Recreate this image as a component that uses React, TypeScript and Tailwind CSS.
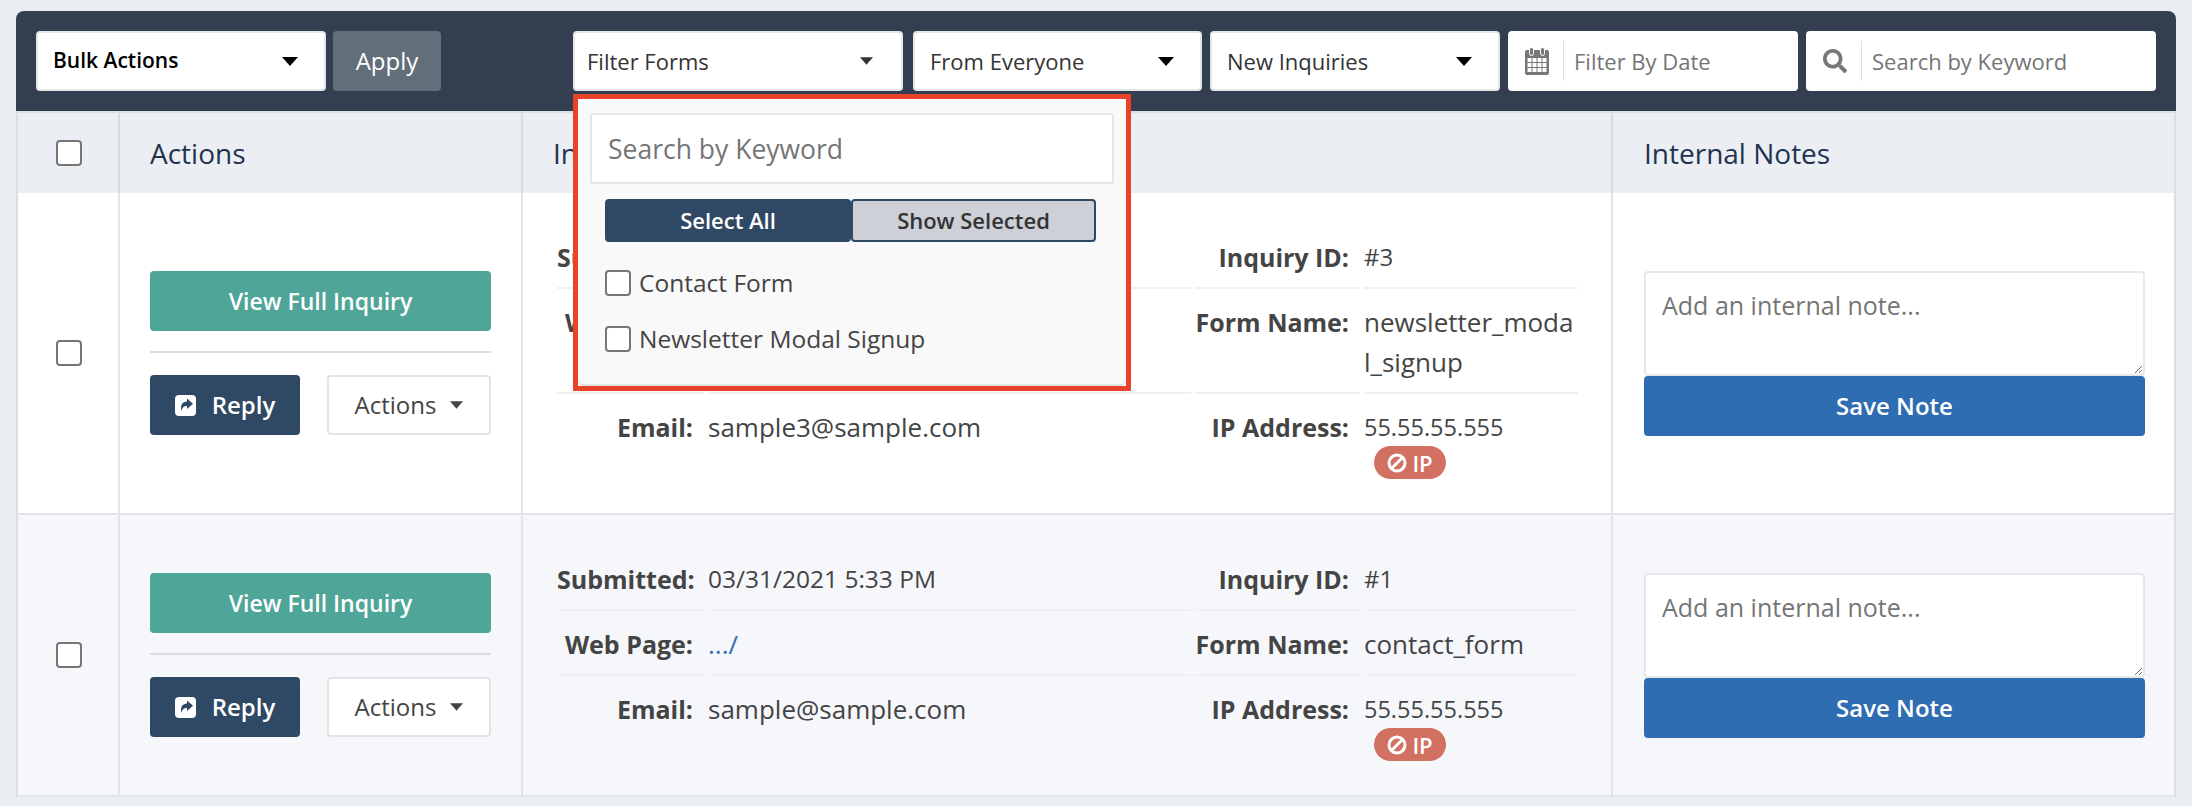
import { FaSearch } from "react-icons/fa";

type Inquiry = {
  submitted: string;
  webPage: string;
  email: string;
  id: string;
  formName: string[];
  ip: string;
  striped: boolean;
};

// row 1's submitted / web page values sit under the open filter popup
const inquiries: Inquiry[] = [
  {
    submitted: "",
    webPage: "",
    email: "sample3@sample.com",
    id: "#3",
    formName: ["newsletter_moda", "l_signup"],
    ip: "55.55.55.555",
    striped: false,
  },
  {
    submitted: "03/31/2021 5:33 PM",
    webPage: ".../",
    email: "sample@sample.com",
    id: "#1",
    formName: ["contact_form"],
    ip: "55.55.55.555",
    striped: true,
  },
];

function Caret({ small }: { small?: boolean }) {
  return (
    <svg width={small ? 13 : 16} height={small ? 8 : 9} viewBox="0 0 16 9" className="shrink-0">
      <path d="M0 0h16L8 9z" fill="currentColor" />
    </svg>
  );
}

function CalendarIcon() {
  return (
    <svg width="24" height="28" viewBox="0 0 24 28">
      <rect x="0" y="3" width="24" height="25" rx="2" fill="#777" />
      <path
        fill="#fff"
        d="M2.5 11h4v4h-4zM7.5 11h4v4h-4zM12.5 11h4v4h-4zM17.5 11h4v4h-4zM2.5 16h4v4h-4zM7.5 16h4v4h-4zM12.5 16h4v4h-4zM17.5 16h4v4h-4zM2.5 21h4v4h-4zM7.5 21h4v4h-4zM12.5 21h4v4h-4zM17.5 21h4v4h-4z"
      />
      <rect x="4.5" y="0.5" width="4" height="8" rx="2" fill="#777" stroke="#fff" />
      <rect x="15.5" y="0.5" width="4" height="8" rx="2" fill="#777" stroke="#fff" />
    </svg>
  );
}

function ReplyIcon() {
  return (
    <svg width="21" height="21" viewBox="0 0 21 21">
      <rect width="21" height="21" rx="4" fill="#fff" />
      <path d="M12 3.5L18 8.8 12 14v-3c-3 0-4.5 1-5.5 5C5 10 7.500 6.500 12 6.500z" fill="#2f4864" />
    </svg>
  );
}

function BanIcon() {
  return (
    <svg width="20" height="20" viewBox="0 0 20 20" fill="none" stroke="#fff" strokeWidth="3">
      <circle cx="10" cy="10" r="8" />
      <path d="M4.500 15.500L15.500 4.500" />
    </svg>
  );
}

function Select({ label, width, dark, small }: { label: string; width: string; dark?: boolean; small?: boolean }) {
  return (
    <div
      className={`flex h-[60px] items-center justify-between rounded-[4px] border-2 border-[#e5e6e8] bg-white ${width} ${
        small ? "pl-3 pr-[28px]" : "pl-[15px] pr-[26px]"
      } ${dark ? "text-[21px] font-semibold text-black" : "text-[22px] font-medium text-[#333]"}`}
    >
      <span>{label}</span>
      <span className={small ? "text-[#333]" : "text-black"}>
        <Caret small={small} />
      </span>
    </div>
  );
}

function IconInput({ icon, placeholder, width }: { icon: React.ReactNode; placeholder: string; width: string }) {
  return (
    <div className={`flex h-[60px] items-center rounded-[4px] bg-white pl-4 ${width}`}>
      <span className="flex w-[25px] justify-center text-[#777]">{icon}</span>
      <span className="ml-[14px] h-10 w-px bg-[#ddd]" />
      <span className="ml-[10px] text-[22px] text-[#757575]">{placeholder}</span>
    </div>
  );
}

function FilterPopup() {
  return (
    <div className="absolute left-0 top-[63px] z-10 w-[558px] border-[5px] border-[#e8432a] bg-white">
      <div className="h-[287px] rounded-b-[6px] border-b-2 border-[#e2e2e2] bg-[#f9f9f9] px-3 pt-[14px]">
        <input
          readOnly
          placeholder="Search by Keyword"
          className="h-[71px] w-full rounded-[3px] border-2 border-[#e6e6e6] bg-white px-4 text-[26.500px] outline-none placeholder:text-[#757575]"
        />
        <div className="mx-[15px] mt-[15px] flex h-[43px] text-[22px] font-semibold">
          <div className="flex w-[246px] items-center justify-center rounded-[4px] bg-[#2f4864] text-white">Select All</div>
          <div className="flex w-[245px] items-center justify-center rounded-[4px] border-2 border-[#2f4864] bg-[#cdd0d7] text-[#333]">
            Show Selected
          </div>
        </div>
        <div className="mx-[15px] mt-7 flex flex-col gap-[30px] text-[24.500px] text-[#444]">
          {["Contact Form", "Newsletter Modal Signup"].map((name) => (
            <div key={name} className="flex h-[26px] items-center gap-2">
              <Box />
              <span className="font-medium">{name}</span>
            </div>
          ))}
        </div>
      </div>
    </div>
  );
}

function Box() {
  return <span className="block h-[26px] w-[26px] shrink-0 rounded-[4px] border-2 border-[#767676] bg-white" />;
}

function Row({ item }: { item: Inquiry }) {
  const cellLine = "border-b-2 border-[#f0f0f0]";
  const label = "pr-[11px] text-right text-[25px] font-bold";
  return (
    <div
      className={`grid grid-cols-[100px_403px_1090px_565px] border-b-2 border-[#e3e4e6] ${
        item.striped ? "bg-[#f5f7fb]" : "bg-white"
      }`}
    >
      <div className="flex items-center justify-center pl-[2px]">
        <Box />
      </div>
      <div className="flex flex-col justify-center border-l-2 border-[#e3e4e6] pl-[30px] pr-[30px]">
        <div className="flex h-[60px] items-center justify-center rounded-[4px] bg-[#4fa598] text-[23px] font-semibold text-white">
          View Full Inquiry
        </div>
        <div className="mt-5 h-0.5 bg-[#ddd]" />
        <div className="mt-[22px] flex justify-between">
          <div className="flex h-[60px] w-[150px] items-center justify-center gap-[16px] rounded-[4px] bg-[#2f4864] text-[24px] font-semibold text-white">
            <ReplyIcon />
            Reply
          </div>
          <div className="flex h-[60px] w-[164px] items-center justify-center gap-[14px] rounded-[4px] border-2 border-[#e3e4e6] bg-white text-[24px] font-medium text-[#444]">
            Actions
            <Caret small />
          </div>
        </div>
      </div>
      <div className="border-l-2 border-[#e3e4e6] pb-[34px] pl-[34px] pr-[34px] pt-11 text-[26px] leading-10 text-[#444]">
        <div className="grid grid-cols-[147px_483px_165px_214px] gap-x-1">
          <div className={`${label} ${cellLine} pb-[10px]`}>Submitted:</div>
          <div className={`${cellLine} pb-[10px] text-[24.500px]`}>{item.submitted}</div>
          <div className={`${label} ${cellLine} pb-[10px]`}>Inquiry ID:</div>
          <div className={`${cellLine} pb-[10px] text-[24px]`}>{item.id}</div>

          <div className={`${label} ${cellLine} pb-[10px] pt-[13px]`}>Web Page:</div>
          <div className={`${cellLine} pb-[10px] pt-[13px] text-[#2f6db5]`}>{item.webPage}</div>
          <div className={`${label} ${cellLine} pb-[10px] pt-[13px]`}>Form Name:</div>
          <div className={`${cellLine} pb-[10px] pt-[13px]`}>
            {item.formName.map((part) => (
              <div key={part}>{part}</div>
            ))}
          </div>

          <div className={`${label} pt-[13px]`}>Email:</div>
          <div className="pt-[13px]">{item.email}</div>
          <div className={`${label} pt-[13px]`}>IP Address:</div>
          <div className="pt-[13px] text-[23.500px]">
            {item.ip}
            <div className="ml-[10px] -mt-px flex h-[33px] w-[72px] items-center justify-center gap-[5px] rounded-full bg-[#d27062] text-[22px] font-semibold leading-none text-white">
              <BanIcon />
              IP
            </div>
          </div>
        </div>
      </div>
      <div className="flex flex-col justify-center border-l-2 border-[#e3e4e6] pl-[31px] pr-[31px]">
        <textarea
          readOnly
          placeholder="Add an internal note..."
          className="h-[105px] w-full rounded-[4px] border-2 border-[#e8e8e8] bg-white px-4 py-[16px] text-[25px] leading-8 outline-none placeholder:text-[#757575]"
        />
        <div className="flex h-[60px] items-center justify-center rounded-[4px] bg-[#2f6db3] text-[24px] font-semibold text-white">
          Save Note
        </div>
      </div>
    </div>
  );
}

export default function App() {
  return (
    <div className="min-h-screen bg-[#ebeef3] px-4 pt-[11px] font-['Open_Sans',sans-serif]">
      <div className="flex h-[100px] items-center justify-between rounded-t-[8px] bg-[#333f50] px-5">
        <div className="flex gap-[7px]">
          <Select label="Bulk Actions" width="w-[290px]" dark />
          <div className="flex h-[60px] w-[108px] items-center justify-center rounded-[4px] bg-[#636e7b] text-[24px] font-medium text-white">
            Apply
          </div>
        </div>
        <div className="flex gap-2">
          <div className="relative mr-0.5">
            <Select label="Filter Forms" width="w-[330px]" small />
            <FilterPopup />
          </div>
          <Select label="From Everyone" width="w-[289px]" />
          <Select label="New Inquiries" width="w-[290px]" />
          <IconInput icon={<CalendarIcon />} placeholder="Filter By Date" width="w-[290px]" />
          <IconInput icon={<FaSearch className="text-[24px]" />} placeholder="Search by Keyword" width="w-[350px]" />
        </div>
      </div>
      <div className="border-x-2 border-t-2 border-x-[#dcdee1] border-t-[#dcdee1]">
        <div className="grid h-[80px] grid-cols-[100px_403px_1090px_565px] items-stretch text-[28px] font-medium text-[#1f3350]">
          <div className="flex items-center justify-center pl-[2px]">
            <Box />
          </div>
          <div className="flex items-center border-l-2 border-[#d9dbde] pl-[30px]">Actions</div>
          <div className="flex items-center border-l-2 border-[#d9dbde] pl-[30px]">Inquiry Details</div>
          <div className="flex items-center border-l-2 border-[#d9dbde] pl-[31px]">Internal Notes</div>
        </div>
        {inquiries.map((item) => (
          <Row key={item.id} item={item} />
        ))}
      </div>
    </div>
  );
}
